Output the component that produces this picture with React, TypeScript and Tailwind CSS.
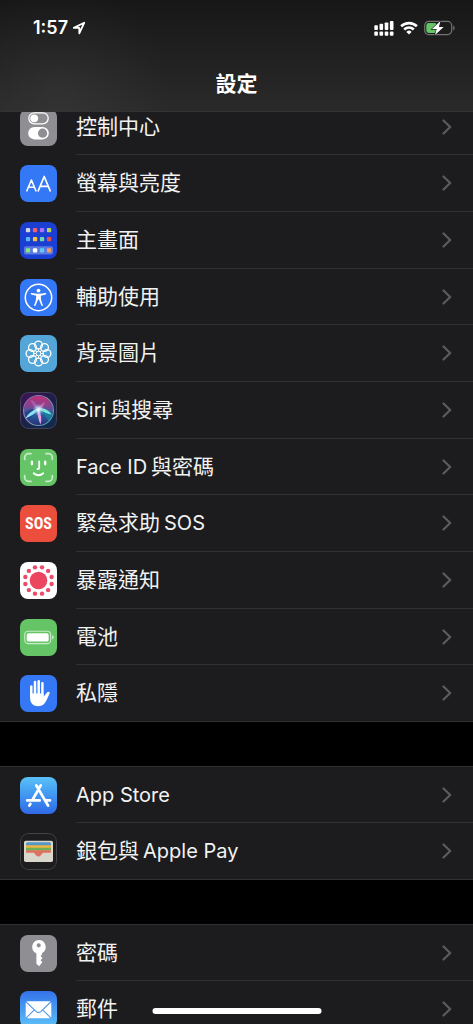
import React from "react";

const polar = (n: number, r: number, offset = 0) =>
  Array.from({ length: n }, (_, i) => {
    const a = ((i + offset) * 2 * Math.PI) / n;
    return [18.5 + r * Math.sin(a), 18.5 - r * Math.cos(a)] as const;
  });

const Svg = ({ children }: { children: React.ReactNode }) => (
  <svg viewBox="0 0 37 37" className="size-full" aria-hidden="true">
    {children}
  </svg>
);

const ControlIcon = () => (
  <Svg>
    <rect x="8.8" y="3.8" width="19.4" height="11" rx="5.5" fill="none" stroke="#fff" strokeWidth="1.3" />
    <circle cx="14.2" cy="9.3" r="3.9" fill="#fff" />
    <rect x="8.2" y="18" width="20.6" height="12.4" rx="6.2" fill="#fff" />
    <circle cx="22.6" cy="24.2" r="4.6" fill="#8e8e93" />
  </Svg>
);

const DisplayIcon = () => (
  <Svg>
    <g fill="none" stroke="#fff" strokeLinecap="round" strokeLinejoin="round">
      <path d="M6.9 25.8 11.4 15l4.5 10.8M8.3 22.3h6.2" strokeWidth="1.6" />
      <path d="M18.2 25.8 24.2 11.5l6 14.3M20 21.3h8.4" strokeWidth="1.7" />
    </g>
  </Svg>
);

const HomeIcon = () => {
  const rows = [
    { y: 6, c: ["#d5d5da", "#f0606a", "#b070f5", "#b9d257"] },
    { y: 15, c: ["#55b8f5", "#f8c13d", "#6fd6ad", "#e8503f"] },
    { y: 26.2, c: ["#84e67c", "#ffffff", "#5ecbf5", "#f0a05c"] },
  ];
  return (
    <Svg>
      <rect x="4" y="24.2" width="29" height="8.2" rx="2" fill="#5c78e2" />
      {rows.map((r) =>
        r.c.map((c, i) => <rect key={c} x={5.9 + i * 7} y={r.y} width="4.3" height="4.3" rx="1" fill={c} />)
      )}
    </Svg>
  );
};

const AccessibilityIcon = () => (
  <Svg>
    <circle cx="18.5" cy="18.5" r="13.2" fill="none" stroke="#fff" strokeWidth="1.5" />
    <circle cx="18.5" cy="11.6" r="1.9" fill="#fff" />
    <path
      d="M11.3 14.1c-.9-.2-.7 1.3 0 1.5l4.8 1.1c.3 3-.3 5-1.9 9.2-.4 1.1.9 1.6 1.4.6l2.5-5.9h.8l2.5 5.9c.5 1 1.8.5 1.4-.6-1.6-4.2-2.2-6.2-1.9-9.2l4.8-1.1c.7-.2.9-1.7 0-1.5-5.3.9-9.1.9-14.4 0Z"
      fill="#fff"
    />
  </Svg>
);

const WallpaperIcon = () => (
  <Svg>
    <g fill="none" stroke="#fff">
      {polar(8, 8.5).map(([x, y], i) => (
        <circle key={i} cx={x} cy={y} r="3.9" strokeWidth="1.3" />
      ))}
      <circle cx="18.5" cy="18.5" r="2.3" strokeWidth="1" />
      {polar(8, 4.8).map(([x, y], i) => (
        <path key={i} d={`M${18.5 + (x - 18.5) * 0.5} ${18.5 + (y - 18.5) * 0.5}L${x} ${y}`} strokeWidth="1.1" />
      ))}
    </g>
  </Svg>
);

const SiriIcon = () => (
  <Svg>
    <defs>
      <linearGradient id="siriBg" x1="0" y1="0" x2="0.7" y2="1">
        <stop offset="0" stopColor="#431254" />
        <stop offset="0.55" stopColor="#1c2048" />
        <stop offset="1" stopColor="#122a4c" />
      </linearGradient>
      <linearGradient id="siriOrb" x1="0.5" y1="0" x2="0.5" y2="1">
        <stop offset="0" stopColor="#c42f79" />
        <stop offset="0.35" stopColor="#834391" />
        <stop offset="0.6" stopColor="#2a66a4" />
        <stop offset="1" stopColor="#263078" />
      </linearGradient>
      <linearGradient id="siriRing" x1="0" y1="0" x2="1" y2="1">
        <stop offset="0" stopColor="#8a62b4" />
        <stop offset="0.5" stopColor="#8f8fae" />
        <stop offset="1" stopColor="#3d9cb0" />
      </linearGradient>
      <radialGradient id="siriGlow">
        <stop offset="0" stopColor="#fff" />
        <stop offset="0.3" stopColor="#d8f4ff" stopOpacity="0.8" />
        <stop offset="1" stopColor="#8be" stopOpacity="0" />
      </radialGradient>
    </defs>
    <rect x="0.5" y="0.5" width="36" height="36" rx="8" fill="url(#siriBg)" stroke="#434058" />
    <circle cx="18.5" cy="18.5" r="14.5" fill="url(#siriOrb)" />
    <path d="M4.5 21c4-4 9-5 14-3C14 21 10 26 8 29c-2-2-3-4-3.5-8Z" fill="#243b8b" opacity="0.8" />
    <path d="M32.5 22c-4-4-9-5-14-4 5 3 8 7 10 11 2-2 3-4 4-7Z" fill="#168ba0" opacity="0.65" />
    <path d="M18.5 18C17 12 14 8 10.5 8c1 4 4 8 8 10Z" fill="#b070b8" opacity="0.6" />
    <path d="M5.5 26.500c2.500-5 7-8.500 13-10C16 21.500 11 24 5.500 26.500Z" fill="#8fe3ee" />
    <path d="M31.500 22.500c-4-.500-9-2.500-13-6.500 6 0 10 2 13 6.500Z" fill="#7be6d7" />
    <path d="M17 17c.300 6 1.500 11 3.500 15.500 1.500-5 .800-10-2-15.500Z" fill="#e9a0dc" />
    <path d="M18 17c2-4 4-6 7-7-1 4-3 6-7 7Z" fill="#dd74a8" opacity="0.7" />
    <circle cx="18.5" cy="17.5" r="6" fill="url(#siriGlow)" />
    <circle cx="18.5" cy="18.5" r="15" fill="none" stroke="url(#siriRing)" strokeWidth="1.1" />
  </Svg>
);

const FaceIcon = () => (
  <Svg>
    <g fill="none" stroke="#fff" strokeLinecap="round">
      <path
        d="M4.7 10.500V8.500a3.800 3.800 0 0 1 3.800-3.800h2.500M26 4.700h2.500a3.800 3.800 0 0 1 3.800 3.800v2M32.300 26.500v2a3.800 3.800 0 0 1-3.800 3.800H26M11 32.300H8.500a3.800 3.800 0 0 1-3.800-3.800v-2"
        strokeWidth="1.7"
        opacity="0.65"
      />
      <path d="M11.900 12.700v2.600M25.200 12.700v2.600" strokeWidth="2.300" />
      <path d="M19.200 12.500v6.200q0 1.300-1.300 1.300h-.4" strokeWidth="1.8" />
      <path d="M13.700 24.300q4.800 3.900 9.600 0" strokeWidth="1.9" />
    </g>
  </Svg>
);

const ExposureIcon = () => (
  <Svg>
    <circle cx="18.5" cy="18.5" r="8.8" fill="#eb4560" />
    {polar(12, 13.6, 0.5).map(([x, y], i) => (
      <circle key={i} cx={x} cy={y} r="2.200" fill="#ec4a68" />
    ))}
  </Svg>
);

const BatteryIcon = () => (
  <Svg>
    <rect x="4.7" y="12.2" width="26" height="12.4" rx="3.6" fill="none" stroke="#c9ecc9" strokeWidth="1.1" />
    <rect x="6.7" y="14.2" width="22" height="8.4" rx="1.9" fill="#fff" />
    <path d="M32.2 16.300c2.200.7 2.200 3.500 0 4.200Z" fill="#c9ecc9" />
  </Svg>
);

const HandIcon = () => (
  <Svg>
    <path d="M11.3 21V11.500M15 20V7M18.700 20V6.200M22.400 21V8.300" fill="none" stroke="#fff" strokeLinecap="round" strokeWidth="2.500" />
    <path
      d="M10.050 18.500h13.600v3.200l3.300-4.200c1.200-1.500 3.400-.6 2.700 1.100L26 26.300c-1.600 3.200-4 4.900-7.600 4.900-5.300 0-8.350-3.500-8.350-8.500Z"
      fill="#fff"
    />
  </Svg>
);

const AppStoreIcon = () => (
  <Svg>
    <g fill="none" stroke="#fff" strokeWidth="2.700" strokeLinecap="round">
      <path d="M20.800 8.300 12.700 22.500M16.200 8.300l11.900 20.300M7.200 23.400h12.500M25.400 23.400h4.600M10.400 26.800l-1.100 1.800" />
    </g>
  </Svg>
);

const WalletIcon = () => (
  <Svg>
    <rect x="0.5" y="0.5" width="36" height="36" rx="8" fill="#1d1d1f" stroke="#434345" />
    <rect x="4" y="7.8" width="29" height="21.2" rx="1.8" fill="#d9d6cb" />
    <path d="M6 10.800q0-1.500 1.500-1.500h22q1.500 0 1.500 1.500V13H6Z" fill="#5297c5" />
    <path d="M6 12.200h25v3H6Z" fill="#efb43f" />
    <path d="M6 14.700h25v3H6Z" fill="#6eb058" />
    <path d="M6 17.200h25v2.500h-7.500c-1.700 0-1.900 3.700-5 3.700s-3.300-3.700-5-3.700H6Z" fill="#df715f" />
  </Svg>
);

const KeyIcon = () => (
  <Svg>
    <path
      fillRule="evenodd"
      d="M18.700 5a7 7 0 0 1 3.200 13.200v1.500l-1.400 1.400 2 2-2 2.100 1.900 1.900-3.200 4.200-2.800-2.600V18.400A7 7 0 0 1 18.700 5Zm0 3.200a2.100 2.100 0 1 0 0 4.200 2.100 2.100 0 0 0 0-4.200Z"
      fill="#fff"
    />
  </Svg>
);

const MailIcon = () => (
  <Svg>
    <rect x="5.700" y="10.300" width="25.600" height="17" rx="1.800" fill="#fff" />
    <path
      d="M6.200 11l9.800 9.300q2.500 2.200 5 0L30.800 11M6.200 26.800l8.200-8M30.800 26.800l-8.200-8"
      fill="none"
      stroke="#4e97ef"
      strokeWidth="1.100"
    />
  </Svg>
);

type Item = { label: string[]; bg: string; icon: React.ReactNode };

const groups: Item[][] = [
  [
    { label: ["控制中心"], bg: "bg-[#8e8e93]", icon: <ControlIcon /> },
    { label: ["螢幕與亮度"], bg: "bg-[#3478f6]", icon: <DisplayIcon /> },
    { label: ["主畫面"], bg: "bg-[#1c3fd3]", icon: <HomeIcon /> },
    { label: ["輔助使用"], bg: "bg-[#3478f6]", icon: <AccessibilityIcon /> },
    { label: ["背景圖片"], bg: "bg-[#55a6d8]", icon: <WallpaperIcon /> },
    { label: ["Siri", "與搜尋"], bg: "bg-[#1c2048]", icon: <SiriIcon /> },
    { label: ["Face ID", "與密碼"], bg: "bg-[#65c466]", icon: <FaceIcon /> },
    {
      label: ["緊急求助", "SOS"],
      bg: "bg-[#eb4e3d]",
      icon: (
        <span
          className="font-['Roboto_Condensed','Liberation_Sans_Narrow','Roboto',sans-serif] text-base font-bold text-white"
          aria-hidden="true"
        >
          SOS
        </span>
      ),
    },
    { label: ["暴露通知"], bg: "bg-white", icon: <ExposureIcon /> },
    { label: ["電池"], bg: "bg-[#65c466]", icon: <BatteryIcon /> },
    { label: ["私隱"], bg: "bg-[#3478f6]", icon: <HandIcon /> },
  ],
  [
    { label: ["App Store"], bg: "bg-linear-to-b from-[#5ac1f7] to-[#3168e8]", icon: <AppStoreIcon /> },
    { label: ["銀包與", "Apple Pay"], bg: "bg-[#1d1d1f]", icon: <WalletIcon /> },
  ],
  [
    { label: ["密碼"], bg: "bg-[#8e8e93]", icon: <KeyIcon /> },
    { label: ["郵件"], bg: "bg-linear-to-b from-[#3672ea] to-[#5fc3f8]", icon: <MailIcon /> },
  ],
];

const isLatin = (text: string) => /^[\x20-\x7e]+$/.test(text);

const Chevron = () => (
  <svg viewBox="0 0 10 16" className="mr-[21px] h-4 w-2.5 shrink-0" aria-hidden="true">
    <path d="M1.5 1.500 8.200 8l-6.700 6.500" fill="none" stroke="#5c5c60" strokeWidth="2.200" strokeLinecap="round" strokeLinejoin="round" />
  </svg>
);

const Row = ({ item }: { item: Item }) => (
  <li className="group flex h-[57px] border-[#303032] last:border-b nth-[3n+1]:h-14">
    <a href="#" className="flex min-w-0 flex-1 items-center gap-[19px] pl-5">
      <span className={`flex size-[37px] shrink-0 items-center justify-center overflow-hidden rounded-lg ${item.bg}`}>
        {item.icon}
      </span>
      <span className="flex min-w-0 flex-1 items-center justify-between self-stretch border-b border-[#303032] group-last:border-b-0">
        <span className="flex items-baseline gap-1 whitespace-nowrap leading-7">
          {item.label.map((part) => (
            <span key={part} className={isLatin(part) ? "text-[20px]" : "text-[21px]"}>
              {part}
            </span>
          ))}
        </span>
        <Chevron />
      </span>
    </a>
  </li>
);

const StatusBar = () => (
  <div className="flex h-14 items-center justify-between pr-[18px] pl-[33px]">
    <div className="flex items-center gap-1">
      <time className="text-[18px] leading-6 font-semibold">1:57</time>
      <svg viewBox="0 0 14 14" className="size-3.5" aria-hidden="true">
        <path d="M1.800 6.900 12.200 1.800 7.300 12.300V6.900Z" fill="none" stroke="#fff" strokeWidth="1.800" strokeLinejoin="round" />
      </svg>
    </div>
    <div className="flex items-center gap-1.5">
      <svg viewBox="0 0 20 16" className="h-4 w-5" fill="#fff" aria-hidden="true">
        {[0, 1, 2, 3].map((i) => (
          <g key={i}>
            <rect x={0.3 + i * 5.2} y={5.2 - i * 1.4} width="3.6" height={4.8 + i * 1.4} rx="0.9" />
            <rect x={0.3 + i * 5.2} y="11.5" width="3.6" height="4.2" rx="0.9" />
          </g>
        ))}
      </svg>
      <svg viewBox="0 0 18 14" className="h-3.5 w-[18px]" aria-hidden="true">
        <g fill="none" stroke="#fff" strokeWidth="2.600">
          <path d="M1.100 5.300a11.300 11.300 0 0 1 15.800 0" />
          <path d="M4.200 8.500a6.800 6.800 0 0 1 9.600 0" />
        </g>
        <path d="M9 13.600 6.400 10.900a3.700 3.700 0 0 1 5.200 0Z" fill="#fff" />
      </svg>
      <svg viewBox="0 0 31 16" className="h-4 w-[31px]" aria-hidden="true">
        <rect x="0.7" y="1.400" width="27" height="13.200" rx="4" fill="none" stroke="#737373" strokeWidth="1.200" />
        <path d="M29.200 5.600c1.900.8 1.900 4 0 4.800Z" fill="#737373" />
        <rect x="2.300" y="3" width="10.500" height="10" rx="2.400" fill="#65c466" />
        <path d="M16.500 1 8 9.100h4.700L11 15l8.600-8.100h-4.700Z" fill="#fff" stroke="#222" strokeWidth="1.200" paintOrder="stroke" />
      </svg>
    </div>
  </div>
);

export default function App() {
  return (
    <div className="h-dvh overflow-y-auto bg-black font-['Inter','Noto_Sans_CJK_TC',sans-serif] text-[#f2f2f2] [scrollbar-width:none]">
      <header className="sticky top-0 z-10 h-28 border-b border-[#333335] bg-[radial-gradient(circle_at_60px_90px,#ffffff0c,transparent_110px),linear-gradient(#171717,#2a2a2b)] text-white">
        <StatusBar />
        <h1 className="flex h-[55px] items-center justify-center text-[21px] leading-7 font-bold">設定</h1>
      </header>
      <main className="-mt-3.5 flex flex-col gap-11">
        {groups.map((items, i) => (
          <ul key={i} className="border-t border-[#303032] bg-[#1c1c1e]">
            {items.map((item) => (
              <Row key={item.label[0]} item={item} />
            ))}
          </ul>
        ))}
      </main>
      <div className="fixed bottom-2.5 left-1/2 z-20 h-1.5 w-[169px] -translate-x-1/2 rounded-full bg-white" />
    </div>
  );
}
